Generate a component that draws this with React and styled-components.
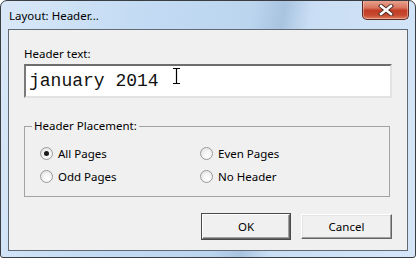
import React from 'react'
import styled, { createGlobalStyle } from 'styled-components'

const GlobalStyle = createGlobalStyle`
  html, body { margin: 0; padding: 0; background: #ffffff; }
  body { font-family: "Segoe UI", "Noto Sans", "Open Sans", sans-serif; font-size: 11.5px; color: #000; }
`

const Window = styled.div`
  box-sizing: border-box;
  width: 416px;
  height: 258px;
  border: 1px solid #3a3d42;
  border-radius: 7px 7px 3px 3px;
  background: linear-gradient(100deg, #d9e8f8 0%, #c3dbf3 30%, #bcd5ef 55%, #a9c4e0 62%, #c9def4 68%, #d6e6f8 100%);
  display: flex;
  flex-direction: column;
  overflow: hidden;
`

const TitleBar = styled.div`
  height: 28px;
  display: flex;
  align-items: flex-start;
  justify-content: space-between;
  padding-left: 8px;
  padding-right: 6px;
`

const Title = styled.div`
  padding-top: 7px;
  font-size: 11.5px;
  line-height: 16px;
  color: #000;
`

const CloseButton = styled.div`
  box-sizing: border-box;
  width: 47px;
  height: 20px;
  margin-top: -1px;
  border: 1px solid #5b2a22;
  border-top: none;
  border-radius: 0 0 5px 5px;
  background: linear-gradient(180deg, #eaa896 0%, #d9765f 40%, #c23d25 55%, #c64a30 80%, #de7e60 100%);
  box-shadow: inset 0 0 0 1px rgba(255, 220, 210, 0.45);
  display: flex;
  align-items: center;
  justify-content: center;
`

const Client = styled.div`
  flex: 1;
  margin: 0 7px 6px 7px;
  border: 1px solid #5f6a75;
  background: #f0f0f0;
  display: flex;
  flex-direction: column;
  padding: 16px 15px 11px 15px;
`

const Label = styled.div`
  line-height: 16px;
  height: 16px;
  margin-bottom: 2px;
`

const TextBox = styled.div`
  box-sizing: border-box;
  position: relative;
  width: 368px;
  height: 34px;
  background: #ffffff;
  border-top: 2px solid #6d6d6d;
  border-left: 2px solid #7a7a7a;
  border-right: 2px solid #e3e3e3;
  border-bottom: 2px solid #e3e3e3;
  display: flex;
  align-items: center;
  padding-left: 3px;
  font-family: "Liberation Mono", "Courier New", monospace;
  font-size: 18px;
  color: #111;
`

const Caret = styled.svg`
  position: absolute;
  left: 147px;
  top: 2px;
`

const Group = styled.fieldset`
  margin: 21px 0 0 0;
  padding: 9px 0 8px 15px;
  width: 366px;
  box-sizing: border-box;
  border: 1px solid #a3a3a3;
  border-radius: 0;
`

const Legend = styled.legend`
  margin-left: -8px;
  padding: 0 2px;
  line-height: 14px;
  font-size: 11.5px;
`

const RadioGrid = styled.div`
  display: grid;
  grid-template-columns: 160px 160px;
  grid-auto-rows: 23px;
`

const RadioRow = styled.label`
  display: flex;
  align-items: center;
  gap: 5px;
`

const Circle = styled.span`
  box-sizing: border-box;
  width: 13px;
  height: 13px;
  border-radius: 50%;
  border: 1px solid #9a9a9a;
  background: radial-gradient(circle at 60% 65%, #ffffff 0%, #f4f4f4 40%, #dcdcdc 100%);
  display: flex;
  align-items: center;
  justify-content: center;
  &::after {
    content: '';
    width: 5px;
    height: 5px;
    border-radius: 50%;
    background: ${p => (p.$checked ? '#1c1c1c' : 'transparent')};
  }
`

const Buttons = styled.div`
  margin-top: auto;
  display: flex;
  justify-content: flex-end;
  gap: 11px;
`

const Button = styled.div`
  box-sizing: border-box;
  width: ${p => (p.$default ? 88 : 91)}px;
  height: 25px;
  display: flex;
  align-items: center;
  justify-content: center;
  background: #f0f0f0;
  border: 1px solid;
  border-color: #ffffff #646464 #646464 #ffffff;
  box-shadow: ${p => (p.$default ? '0 0 0 1px #4a4a4a, inset -1px -1px 0 #a0a0a0' : 'inset -1px -1px 0 #a0a0a0, inset 1px 1px 0 #e3e3e3')};
`

const options = [
  { label: 'All Pages', checked: true },
  { label: 'Even Pages' },
  { label: 'Odd Pages' },
  { label: 'No Header' },
]

export default function App() {
  return (
    <>
      <GlobalStyle />
      <Window>
        <TitleBar>
          <Title>Layout: Header...</Title>
          <CloseButton>
            <svg width="16" height="12" viewBox="0 0 16 12">
              <path d="M3 2 L13 10 M13 2 L3 10" stroke="#4a2a24" strokeWidth="4.2" strokeLinecap="square" />
              <path d="M3 2 L13 10 M13 2 L3 10" stroke="#ffffff" strokeWidth="2.4" strokeLinecap="square" />
            </svg>
          </CloseButton>
        </TitleBar>
        <Client>
          <Label>Header text:</Label>
          <TextBox>
            january 2014
            <Caret width="7" height="16" viewBox="0 0 7 16">
              <path d="M0 0.5 H7 M0 15.5 H7 M3.5 0.5 V15.5" stroke="#000" strokeWidth="1.2" fill="none" />
            </Caret>
          </TextBox>
          <Group>
            <Legend>Header Placement:</Legend>
            <RadioGrid>
              {options.map(o => (
                <RadioRow key={o.label}>
                  <Circle $checked={o.checked} />
                  {o.label}
                </RadioRow>
              ))}
            </RadioGrid>
          </Group>
          <Buttons>
            <Button $default>OK</Button>
            <Button>Cancel</Button>
          </Buttons>
        </Client>
      </Window>
    </>
  )
}
